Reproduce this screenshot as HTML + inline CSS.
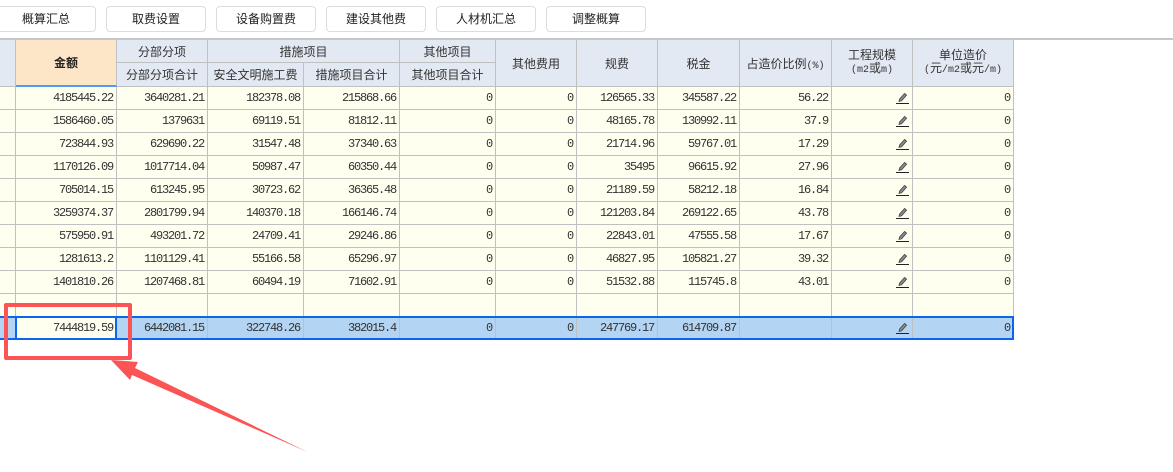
<!DOCTYPE html>
<html lang="zh"><head><meta charset="utf-8"><title>概算汇总</title>
<style>
html,body{margin:0;padding:0;background:#fff;width:1173px;height:472px;overflow:hidden;position:relative;font-family:"WenQuanYi Zen Hei","Noto Sans CJK SC","Liberation Sans",sans-serif;color:#222}
.b{position:absolute;top:6px;width:100px;height:26px;box-sizing:border-box;border:1px solid #dcdcdc;border-radius:4px;background:#fff;text-align:center;font-size:12px;line-height:24px;color:#222}
.top{position:absolute;left:0;top:38px;width:1173px;height:2px;background:#c6c6c9}
table{position:absolute;left:0;top:40px;border-collapse:separate;border-spacing:0;table-layout:fixed;width:1014px}
td,th{box-sizing:border-box;border-right:1px solid #c0c0c0;border-bottom:1px solid #c0c0c0;padding:0;overflow:hidden;white-space:nowrap}
th{background:#e3e9f2;font-weight:normal;font-size:12px;color:#333;text-align:center}
th.g{background:#fde5c8;font-weight:bold;color:#222;border-bottom:2px solid #4d9cf0}
th i{font:normal 10px "Liberation Mono",monospace}
th div{line-height:13px}
th.t{padding-bottom:2px}
td{background:#fffff0;height:23px;text-align:right;padding-right:3px;font:12px/21px "Liberation Mono",monospace;letter-spacing:-1.2px;color:#333}
tr.s td{background:#b3d4f3}
tr.s td.c{background:#fffff0}
td svg{display:block;margin:0 0 0 auto}
.sel{position:absolute;background:#0a66ee}
</style></head><body>
<div class="b" style="left:-4px">概算汇总</div>
<div class="b" style="left:106px">取费设置</div>
<div class="b" style="left:216px">设备购置费</div>
<div class="b" style="left:326px">建设其他费</div>
<div class="b" style="left:436px">人材机汇总</div>
<div class="b" style="left:546px">调整概算</div>
<div class="top"></div>
<svg width="0" height="0" style="position:absolute"><defs><symbol id="p" viewBox="0 0 13 12"><path d="M0 11.500H13" stroke="#222" stroke-width="1" fill="none"/><path d="M3 9.500L3.600 7L8.600 1.400L10.600 3.200L5.600 8.800Z" fill="#8a8a8a" stroke="#444" stroke-width=".8"/></symbol></defs></svg>
<table>
<colgroup><col style="width:16px"><col style="width:101px"><col style="width:91px"><col style="width:96px"><col style="width:96px"><col style="width:96px"><col style="width:81px"><col style="width:81px"><col style="width:82px"><col style="width:92px"><col style="width:81px"><col style="width:101px"></colgroup>
<tr style="height:23px"><th rowspan="2"></th><th rowspan="2" class="g">金额</th><th>分部分项</th><th colspan="2">措施项目</th><th>其他项目</th><th rowspan="2">其他费用</th><th rowspan="2">规费</th><th rowspan="2">税金</th><th rowspan="2">占造价比例<i>(%)</i></th><th rowspan="2" class="t"><div>工程规模</div><div><i>(m2</i>或<i>m)</i></div></th><th rowspan="2" class="t"><div>单位造价</div><div><i>(</i>元<i>/m2</i>或元<i>/m)</i></div></th></tr>
<tr style="height:24px"><th>分部分项合计</th><th>安全文明施工费</th><th>措施项目合计</th><th>其他项目合计</th></tr>
<tr><td></td><td>4185445.22</td><td>3640281.21</td><td>182378.08</td><td>215868.66</td><td>0</td><td>0</td><td>126565.33</td><td>345587.22</td><td>56.22</td><td><svg width="13" height="12"><use href="#p"/></svg></td><td>0</td></tr>
<tr><td></td><td>1586460.05</td><td>1379631</td><td>69119.51</td><td>81812.11</td><td>0</td><td>0</td><td>48165.78</td><td>130992.11</td><td>37.9</td><td><svg width="13" height="12"><use href="#p"/></svg></td><td>0</td></tr>
<tr><td></td><td>723844.93</td><td>629690.22</td><td>31547.48</td><td>37340.63</td><td>0</td><td>0</td><td>21714.96</td><td>59767.01</td><td>17.29</td><td><svg width="13" height="12"><use href="#p"/></svg></td><td>0</td></tr>
<tr><td></td><td>1170126.09</td><td>1017714.04</td><td>50987.47</td><td>60350.44</td><td>0</td><td>0</td><td>35495</td><td>96615.92</td><td>27.96</td><td><svg width="13" height="12"><use href="#p"/></svg></td><td>0</td></tr>
<tr><td></td><td>705014.15</td><td>613245.95</td><td>30723.62</td><td>36365.48</td><td>0</td><td>0</td><td>21189.59</td><td>58212.18</td><td>16.84</td><td><svg width="13" height="12"><use href="#p"/></svg></td><td>0</td></tr>
<tr><td></td><td>3259374.37</td><td>2801799.94</td><td>140370.18</td><td>166146.74</td><td>0</td><td>0</td><td>121203.84</td><td>269122.65</td><td>43.78</td><td><svg width="13" height="12"><use href="#p"/></svg></td><td>0</td></tr>
<tr><td></td><td>575950.91</td><td>493201.72</td><td>24709.41</td><td>29246.86</td><td>0</td><td>0</td><td>22843.01</td><td>47555.58</td><td>17.67</td><td><svg width="13" height="12"><use href="#p"/></svg></td><td>0</td></tr>
<tr><td></td><td>1281613.2</td><td>1101129.41</td><td>55166.58</td><td>65296.97</td><td>0</td><td>0</td><td>46827.95</td><td>105821.27</td><td>39.32</td><td><svg width="13" height="12"><use href="#p"/></svg></td><td>0</td></tr>
<tr><td></td><td>1401810.26</td><td>1207468.81</td><td>60494.19</td><td>71602.91</td><td>0</td><td>0</td><td>51532.88</td><td>115745.8</td><td>43.01</td><td><svg width="13" height="12"><use href="#p"/></svg></td><td>0</td></tr>
<tr><td></td><td></td><td></td><td></td><td></td><td></td><td></td><td></td><td></td><td></td><td></td><td></td></tr>
<tr class="s"><td></td><td class="c">7444819.59</td><td>6442081.15</td><td>322748.26</td><td>382015.4</td><td>0</td><td>0</td><td>247769.17</td><td>614709.87</td><td></td><td><svg width="13" height="12"><use href="#p"/></svg></td><td>0</td></tr>
</table>
<div class="sel" style="left:0;top:316px;width:1014px;height:2px"></div>
<div class="sel" style="left:0;top:338px;width:1014px;height:2px"></div>
<div class="sel" style="left:15px;top:316px;width:2px;height:24px"></div>
<div class="sel" style="left:115px;top:316px;width:2px;height:24px"></div>
<div class="sel" style="left:1012px;top:316px;width:2px;height:24px"></div>
<svg width="1173" height="472" style="position:absolute;left:0;top:0">
<rect x="6" y="305" width="124" height="53" fill="none" stroke="#fc5454" stroke-width="4" stroke-linejoin="round"/>
<path d="M111 360L138 362L135 368L307.500 452L132 375L130 380Z" fill="#fc5454"/>
</svg>
</body></html>
